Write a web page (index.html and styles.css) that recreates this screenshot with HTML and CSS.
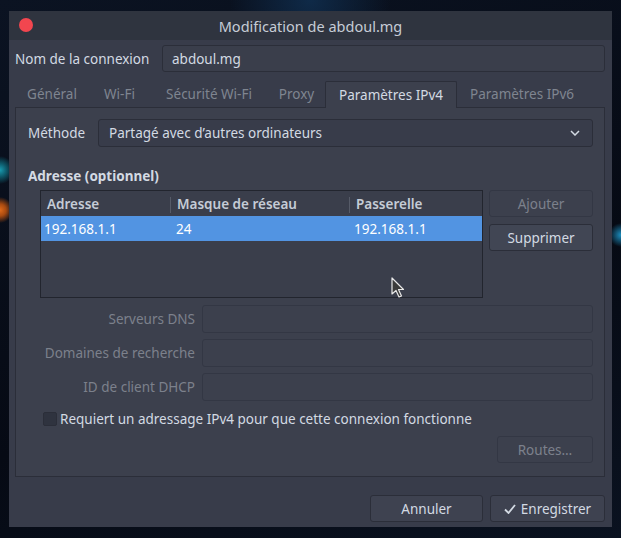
FILE: index.html
```html
<!DOCTYPE html>
<html lang="fr">
<head>
<meta charset="utf-8">
<title>Modification de abdoul.mg</title>
<link rel="stylesheet" href="styles.css">
</head>
<body>
<div class="wallpaper">
  <div class="win">
    <div class="titlebar">
      <span class="close"></span>
      <span class="title">Modification de abdoul.mg</span>
    </div>
    <div class="content">
      <div class="name-row">
        <span class="label">Nom de la connexion</span>
        <div class="entry">abdoul.mg</div>
      </div>
      <div class="tabs">
        <div class="tab t1">Général</div>
        <div class="tab t2">Wi-Fi</div>
        <div class="tab t3">Sécurité Wi-Fi</div>
        <div class="tab t4">Proxy</div>
        <div class="tab t5 active">Paramètres IPv4</div>
        <div class="tab t6">Paramètres IPv6</div>
      </div>
      <div class="panel">
        <div class="method-row">
          <span class="label">Méthode</span>
          <div class="combo">
            <span>Partagé avec d’autres ordinateurs</span>
            <svg class="chev" width="10" height="6" viewBox="0 0 10 6"><path d="M1 1 L5 5 L9 1" fill="none" stroke="#d3dae3" stroke-width="1.5"/></svg>
          </div>
        </div>
        <div class="section-title">Adresse (optionnel)</div>
        <div class="addr-row">
          <div class="table">
            <div class="thead">
              <div class="th c1">Adresse</div>
              <div class="th c2">Masque de réseau</div>
              <div class="th c3">Passerelle</div>
            </div>
            <div class="trow selected">
              <div class="td c1">192.168.1.1</div>
              <div class="td c2">24</div>
              <div class="td c3">192.168.1.1</div>
            </div>
          </div>
          <div class="side-btns">
            <div class="btn disabled">Ajouter</div>
            <div class="btn">Supprimer</div>
          </div>
        </div>
        <div class="form">
          <span class="flabel">Serveurs DNS</span><div class="entry dim"></div>
          <span class="flabel">Domaines de recherche</span><div class="entry dim"></div>
          <span class="flabel">ID de client DHCP</span><div class="entry dim"></div>
        </div>
        <div class="check-row">
          <span class="checkbox"></span>
          <span class="label">Requiert un adressage IPv4 pour que cette connexion fonctionne</span>
        </div>
        <div class="routes-row">
          <div class="btn disabled routes">Routes…</div>
        </div>
      </div>
      <div class="actions">
        <div class="btn cancel">Annuler</div>
        <div class="btn save"><svg width="12" height="10" viewBox="0 0 12 10"><path d="M1 5.5 L4.5 9 L11 1" fill="none" stroke="#d3dae3" stroke-width="1.8"/></svg>Enregistrer</div>
      </div>
    </div>
  </div>
  <svg class="cursor" width="14" height="22" viewBox="0 0 14 22"><path d="M1 1 L1 17 L5 13.5 L8 20 L10.5 19 L7.5 12.5 L12.5 12.5 Z" fill="#3b3b3b" stroke="#e8e8e8" stroke-width="1.2" stroke-linejoin="round"/></svg>
</div>
</body>
</html>
```
FILE: styles.css
```css
* { box-sizing: border-box; }
html, body { margin: 0; padding: 0; }
body {
  width: 621px;
  height: 538px;
  overflow: hidden;
  font-family: "Noto Sans", "DejaVu Sans", sans-serif;
  font-size: 13.5px;
  color: #d3dae3;
  background: #080c16;
}
.wallpaper {
  position: relative;
  width: 621px;
  height: 538px;
  padding: 11px 0 0 9px;
  background:
    radial-gradient(circle at 0px 170px, #1a9bb0 0, #0e5f70 6px, transparent 14px),
    radial-gradient(circle at 0px 210px, #e06a1a 0, #a84a10 6px, transparent 13px),
    radial-gradient(circle at 621px 235px, #1c8fc0 0, transparent 12px),
    radial-gradient(circle at 310px 0px, #0f2a48 0, transparent 80px),
    linear-gradient(160deg, #0b1322 0%, #060a14 60%, #0a1220 100%);
}
.win {
  width: 603px;
  height: 516px;
  background: #383c4a;
  display: flex;
  flex-direction: column;
}
.titlebar {
  height: 29px;
  background: #2f343f;
  display: flex;
  align-items: center;
  justify-content: center;
  position: relative;
  flex: none;
}
.close {
  position: absolute;
  left: 10px;
  top: 7px;
  width: 14px;
  height: 14px;
  border-radius: 50%;
  background: #f2464f;
}
.title { font-size: 14.5px; color: #c6ccd6; }
.content {
  padding: 5px 7px 0 6px;
  display: flex;
  flex-direction: column;
}
.name-row {
  display: flex;
  align-items: center;
  height: 27px;
}
.name-row .label { width: 147px; white-space: nowrap; }
.entry {
  flex: 1;
  height: 27px;
  background: #3a3e4b;
  border: 1px solid #2b2e39;
  border-radius: 3px;
  display: flex;
  align-items: center;
  padding: 0 9px;
}
.tabs {
  display: flex;
  margin-top: 9px;
  height: 26px;
  position: relative;
  z-index: 1;
}
.tab {
  display: flex;
  align-items: center;
  justify-content: center;
  color: #7f8590;
  height: 26px;
  white-space: nowrap;
}
.t1 { width: 74px; }
.t2 { width: 61px; }
.t3 { width: 118px; }
.t4 { width: 57px; }
.t5 { width: 132px; }
.t6 { width: 130px; }
.tab.active {
  color: #d3dae3;
  background: #3c404d;
  border: 1px solid #2b2e39;
  border-bottom: none;
  height: 27px;
  border-radius: 2px 2px 0 0;
}
.panel {
  height: 370px;
  background: #3c404d;
  border: 1px solid #2b2e39;
  padding: 11px 11px 0 12px;
  display: flex;
  flex-direction: column;
}
.method-row {
  display: flex;
  align-items: center;
  height: 28px;
}
.method-row .label { width: 70px; }
.combo {
  flex: 1;
  height: 28px;
  background: #383c4a;
  border: 1px solid #2b2e39;
  border-radius: 3px;
  display: flex;
  align-items: center;
  justify-content: space-between;
  padding: 0 12px 0 10px;
}
.section-title {
  font-weight: bold;
  margin-top: 20px;
  height: 18px;
  line-height: 18px;
}
.addr-row {
  display: flex;
  margin-top: 5px;
  padding-left: 12px;
  gap: 6px;
  height: 108px;
}
.table {
  width: 443px;
  height: 108px;
  border: 1px solid #22252e;
  background: #3a3e4b;
}
.thead, .trow { display: flex; height: 25px; align-items: center; }
.th { font-weight: 600; color: #c5ccd6; position: relative; white-space: nowrap; }
.th.c2::before, .th.c3::before {
  content: "";
  position: absolute;
  left: -1px;
  top: 2px;
  width: 1px;
  height: 16px;
  background: #565b68;
}
.c1 { width: 130px; padding-left: 6px; }
.c2 { width: 179px; padding-left: 6px; }
.c3 { flex: 1; padding-left: 6px; }
.trow.selected { background: #5294e2; color: #ffffff; }
.trow .c1 { padding-left: 3px; }
.trow .c2 { padding-left: 5px; }
.trow .c3 { padding-left: 4px; }
.side-btns { display: flex; flex-direction: column; gap: 7px; width: 104px; }
.btn {
  height: 27px;
  border: 1px solid #2b2e39;
  border-radius: 3px;
  background: #414654;
  display: flex;
  align-items: center;
  justify-content: center;
  gap: 5px;
  color: #d3dae3;
}
.btn.disabled { background: #3c404d; color: #7c818c; border-color: #333744; }
.form {
  display: grid;
  grid-template-columns: 167px 1fr;
  column-gap: 7px;
  row-gap: 6px;
  margin-top: 7px;
}
.flabel {
  text-align: right;
  color: #7c818c;
  align-self: center;
  white-space: nowrap;
}
.entry.dim { height: 28px; background: #3c404d; border-color: #333744; }
.check-row {
  display: flex;
  align-items: center;
  gap: 3px;
  margin-top: 11px;
  padding-left: 15px;
  height: 14px;
}
.check-row .label { white-space: nowrap; }
.checkbox {
  width: 14px;
  height: 14px;
  flex: none;
  border: 1px solid #2b2e39;
  border-radius: 2px;
  background: #2f333f;
}
.routes-row {
  display: flex;
  justify-content: flex-end;
  margin-top: 10px;
}
.routes { width: 96px; }
.actions {
  display: flex;
  justify-content: flex-end;
  gap: 7px;
  margin-top: 18px;
}
.cancel { width: 113px; background: #3e4250; }
.save { width: 115px; background: #3e4250; }
.cursor {
  position: absolute;
  left: 391px;
  top: 277px;
}
```
